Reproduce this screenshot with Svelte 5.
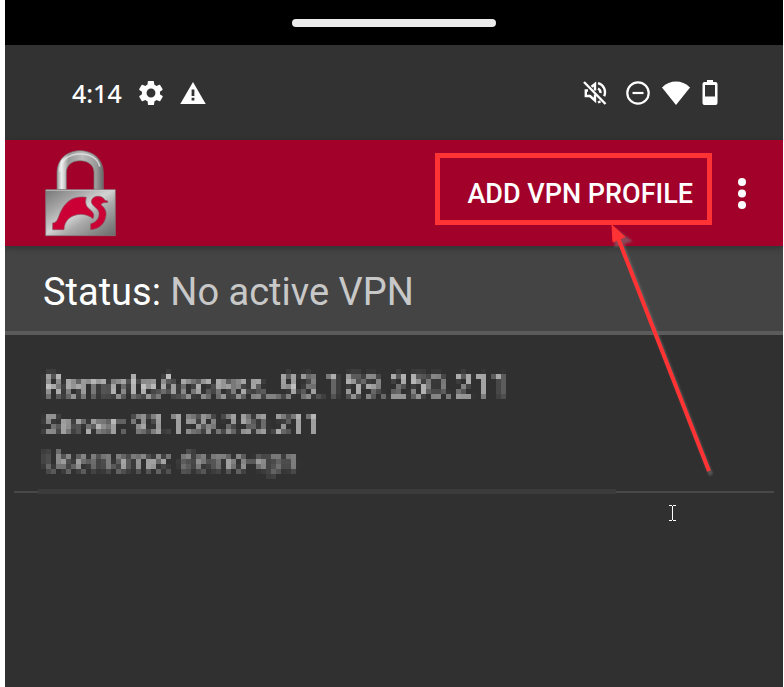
<script>
  const profile = {
    name: 'RemoteAccess_93.159.250.211',
    server: '93.159.250.211',
    username: 'demo-vpn'
  };
</script>

<svg class="defs" width="0" height="0" aria-hidden="true">
  <filter id="mosaic" x="0" y="0" width="1" height="1" color-interpolation-filters="sRGB">
    <feGaussianBlur in="SourceGraphic" stdDeviation="1.3" result="soft" />
    <feFlood x="2" y="2" width="1" height="1" flood-color="#fff" result="dot" />
    <feOffset in="dot" dx="0" dy="0" x="0" y="0" width="5" height="5" result="unit" />
    <feTile in="unit" result="grid" />
    <feComposite in="soft" in2="grid" operator="in" />
    <feMorphology operator="dilate" radius="2" />
  </filter>
</svg>

<div class="screen">
  <div class="bezel"><span class="pill"></span></div>

  <div class="system">
    <div class="group">
      <time>4:14</time>
      <svg class="gear" viewBox="2 2 20 20" width="24" height="24" aria-label="Settings">
        <path fill="#fff" d="M19.4 13c.1-.3.1-.7.1-1s0-.7-.1-1l2.1-1.600c.2-.2.300-.4.100-.7l-2-3.400c-.1-.2-.4-.3-.6-.2l-2.500 1c-.5-.4-1.100-.7-1.700-1l-.4-2.600c0-.3-.2-.5-.5-.5h-4c-.3 0-.5.2-.5.5l-.4 2.600c-.6.3-1.200.6-1.700 1l-2.500-1c-.2-.1-.5 0-.6.2l-2 3.400c-.1.300-.1.500.1.700L4.500 11c0 .3-.1.700-.1 1s0 .7.100 1l-2.100 1.600c-.2.2-.2.4-.1.700l2 3.400c.1.200.4.300.6.200l2.500-1c.5.4 1.100.7 1.700 1l.4 2.600c0 .3.2.500.5.500h4c.3 0 .5-.2.5-.5l.4-2.600c.6-.3 1.200-.6 1.700-1l2.500 1c.2.100.5 0 .6-.2l2-3.400c.1-.300.1-.5-.1-.7zM12 15.700a3.700 3.700 0 1 1 0-7.400 3.700 3.700 0 0 1 0 7.400z" />
      </svg>
      <svg viewBox="1 2 22 19" width="26" height="22" aria-label="Warning">
        <path fill="#fff" fill-rule="evenodd" d="M1 21h22L12 2zM13.200 18h-2.400v-2.300h2.400zm0-4h-2.400V8.500h2.400z" />
      </svg>
    </div>
    <div class="group right">
      <svg class="mute" viewBox="0 0 24 24" width="24" height="24" fill="none" stroke="#fff" stroke-width="2.400" aria-label="Muted">
        <path d="M1 1l21.500 22" />
        <path d="M5 9.500H2.800v5.500H7l5 4.500v-6M8.500 5.800L12 3v6.500" />
        <path d="M15 2.200c5.500 1.500 8.500 7 6.200 13M15 21.500l2.500-1.200M15 7.500c2 1 2.600 2.600 2.400 4.500" />
      </svg>
      <svg viewBox="0 0 24 24" width="24" height="24" fill="none" stroke="#fff" stroke-width="2.200" aria-label="Do not disturb">
        <circle cx="12" cy="12" r="10.700" /><path d="M6.500 12h11" />
      </svg>
      <svg viewBox="0 0 28 24" width="28" height="24" aria-label="Wi-Fi"><path fill="#fff" d="M0 6.500C8-1.400 20-1.400 28 6.500L14 24z" /></svg>
      <svg viewBox="0 0 16 25" width="16" height="25" aria-label="Battery">
        <path fill="#fff" fill-rule="evenodd" d="M5 0h6v2h2.500Q15.500 2 15.500 4v19q0 2-2 2h-11q-2 0-2-2V4q0-2 2-2H5zM3 5v11.500h10V5z" />
      </svg>
    </div>
  </div>

  <header>
    <svg viewBox="45 42 213 261" width="71" height="87" role="img" aria-label="VPN client">
      <defs>
        <linearGradient id="steel" x1="0" y1="0" x2="1" y2="1">
          <stop offset="0" stop-color="#777" /><stop offset=".25" stop-color="#a2a2a2" />
          <stop offset=".48" stop-color="#d2d2d2" /><stop offset=".62" stop-color="#aaa" />
          <stop offset="1" stop-color="#696969" />
        </linearGradient>
        <linearGradient id="shackle" x1="0" y1="0" x2="1" y2="0">
          <stop offset="0" stop-color="#999" /><stop offset=".1" stop-color="#eee" />
          <stop offset=".25" stop-color="#999" /><stop offset=".55" stop-color="#bbb" />
          <stop offset=".85" stop-color="#999" /><stop offset="1" stop-color="#666" />
        </linearGradient>
      </defs>
      <path fill="url(#shackle)" stroke="#777" stroke-width="2" d="M81 161v-51c0-38 28-66 69-66s70 28 70 66v51h-28v-51c0-23-18-36-42-36s-41 13-41 36v51z" />
      <path fill="none" stroke="#eee" stroke-width="5" opacity=".7" d="M89 107c2-32 25-53 61-53 32 0 55 14 59 38" />
      <path fill="url(#steel)" stroke="#7d7d7d" stroke-width="2" d="M47 161h209v138H47z" />
      <path fill="none" stroke="#d4d4d4" stroke-width="3" opacity=".7" d="M48 163h207" />
      <g fill="#cb0034" stroke="#8a5560" stroke-width="2">
        <path d="M68 281v-20c16-1 16-18 25-36 15-31 40-47 76-41-5 17-1 27 10 36 12 9 15 18 10 28-10-8-22-13-38-13-30 2-48 19-49 46z" />
        <path d="M184 196c3-19 33-21 41-3l8 2v5c-10-1-19 1-20 6 10 8 17 18 15 33-3 24-20 40-46 42v-18c15-3 27-16 25-33-2-14-23-19-23-34z" />
      </g>
    </svg>
    <div class="actions">
      <div class="callout">
        <button class="add">ADD VPN PROFILE</button>
        <svg class="arrow" viewBox="0 0 110 255" width="110" height="255" aria-hidden="true">
          <g class="shadow"><path d="M14 18l90 233" /><path class="head" d="M8 5v18l17-6z" /></g>
          <path d="M11 14l91 233" /><path class="head" d="M5 1l1 17 12-5z" />
        </svg>
      </div>
      <button class="more" aria-label="More options">
        <svg viewBox="0 0 8 31" width="8" height="31" fill="#fff"><circle cx="4" cy="4" r="4" /><circle cx="4" cy="15.500" r="4" /><circle cx="4" cy="27" r="4" /></svg>
      </button>
    </div>
  </header>

  <h1>Status: <span>No active VPN</span></h1>

  <main>
    <a class="profile" href="#profile">
      <strong>{profile.name}</strong>
      <span>Server: {profile.server}</span>
      <span>Username: {profile.username}</span>
    </a>
    <div class="divider"><i></i></div>
    <svg class="cursor" viewBox="0 0 7 16" width="7" height="16" fill="none" stroke="#fff" aria-hidden="true"><path d="M0 .5h3M4 .5h3M3.500 1v14M0 15.500h3M4 15.500h3" /></svg>
  </main>
</div>

<style>
  :global(body) { margin: 0; background: #fff; }
  .defs { position: absolute; }
  .screen {
    box-sizing: border-box;
    min-height: 100vh;
    margin: 0 1px 0 5px;
    display: flex;
    flex-direction: column;
    overflow: hidden;
    background: #303030;
    color: #fff;
    font-family: Roboto, sans-serif;
  }
  svg { display: block; flex: none; }
  .bezel { height: 45px; background: #000; display: flex; align-items: center; justify-content: center; }
  .pill { width: 204px; height: 8px; border-radius: 4px; background: #ebebeb; }
  .system {
    height: 95px;
    padding: 0 65px 0 67px;
    background: #323232;
    display: flex;
    align-items: center;
    justify-content: space-between;
  }
  .group { display: flex; align-items: center; gap: 17px; }
  .group.right { gap: 12px; }
  .mute { margin-right: 7px; }
  time { font: 500 25px/32px "Noto Sans", sans-serif; }
  header {
    height: 106px;
    padding: 0 32px 0 40px;
    background: #a20229;
    display: flex;
    align-items: center;
    justify-content: space-between;
    position: relative;
    z-index: 1;
    box-shadow: 0 2px 6px rgba(0, 0, 0, .3);
  }
  .actions { display: flex; align-items: center; gap: 21px; }
  .callout { position: relative; margin-bottom: 8px; }
  button { font: inherit; color: inherit; background: none; border: 0; padding: 0; cursor: pointer; }
  .add {
    display: block;
    height: 72px;
    padding: 10px 14px 0 27px;
    border: 5px solid #ff3333;
    font-size: 27px;
    font-weight: 500;
    white-space: nowrap;
  }
  .more { padding: 0 5px; }
  .arrow { position: absolute; top: 71px; right: -5px; pointer-events: none; fill: none; stroke: #ff3333; stroke-width: 4; }
  .arrow .head { fill: #ff3333; stroke-width: 1; }
  .shadow { stroke: #777; opacity: .6; filter: blur(1px); }
  .shadow .head { fill: #777; }
  h1 {
    margin: 0;
    padding: 24px 38px 17px;
    border-bottom: 4px solid #5b5b5b;
    background: #444;
    font-size: 38px;
    line-height: 44px;
    font-weight: 400;
  }
  h1 span { color: #c8c8c8; }
  main { position: relative; padding: 29px 9px 0; }
  .profile {
    display: flex;
    flex-direction: column;
    margin: 0 27px;
    padding-left: 2px;
    height: 125px;
    color: #d0d0d0;
    text-decoration: none;
    filter: url(#mosaic);
  }
  strong { font-size: 33px; line-height: 43px; font-weight: 400; }
  .profile span { font-size: 27px; line-height: 37px; }
  .divider { height: 5px; padding: 0 158px 0 24px; background: linear-gradient(#303030 2px, #484848 2px, #484848 4px, #303030 4px); }
  .divider i { display: block; height: 5px; background: #3b3b3b; }
  .cursor { position: absolute; top: 170px; right: 107px; }
</style>
